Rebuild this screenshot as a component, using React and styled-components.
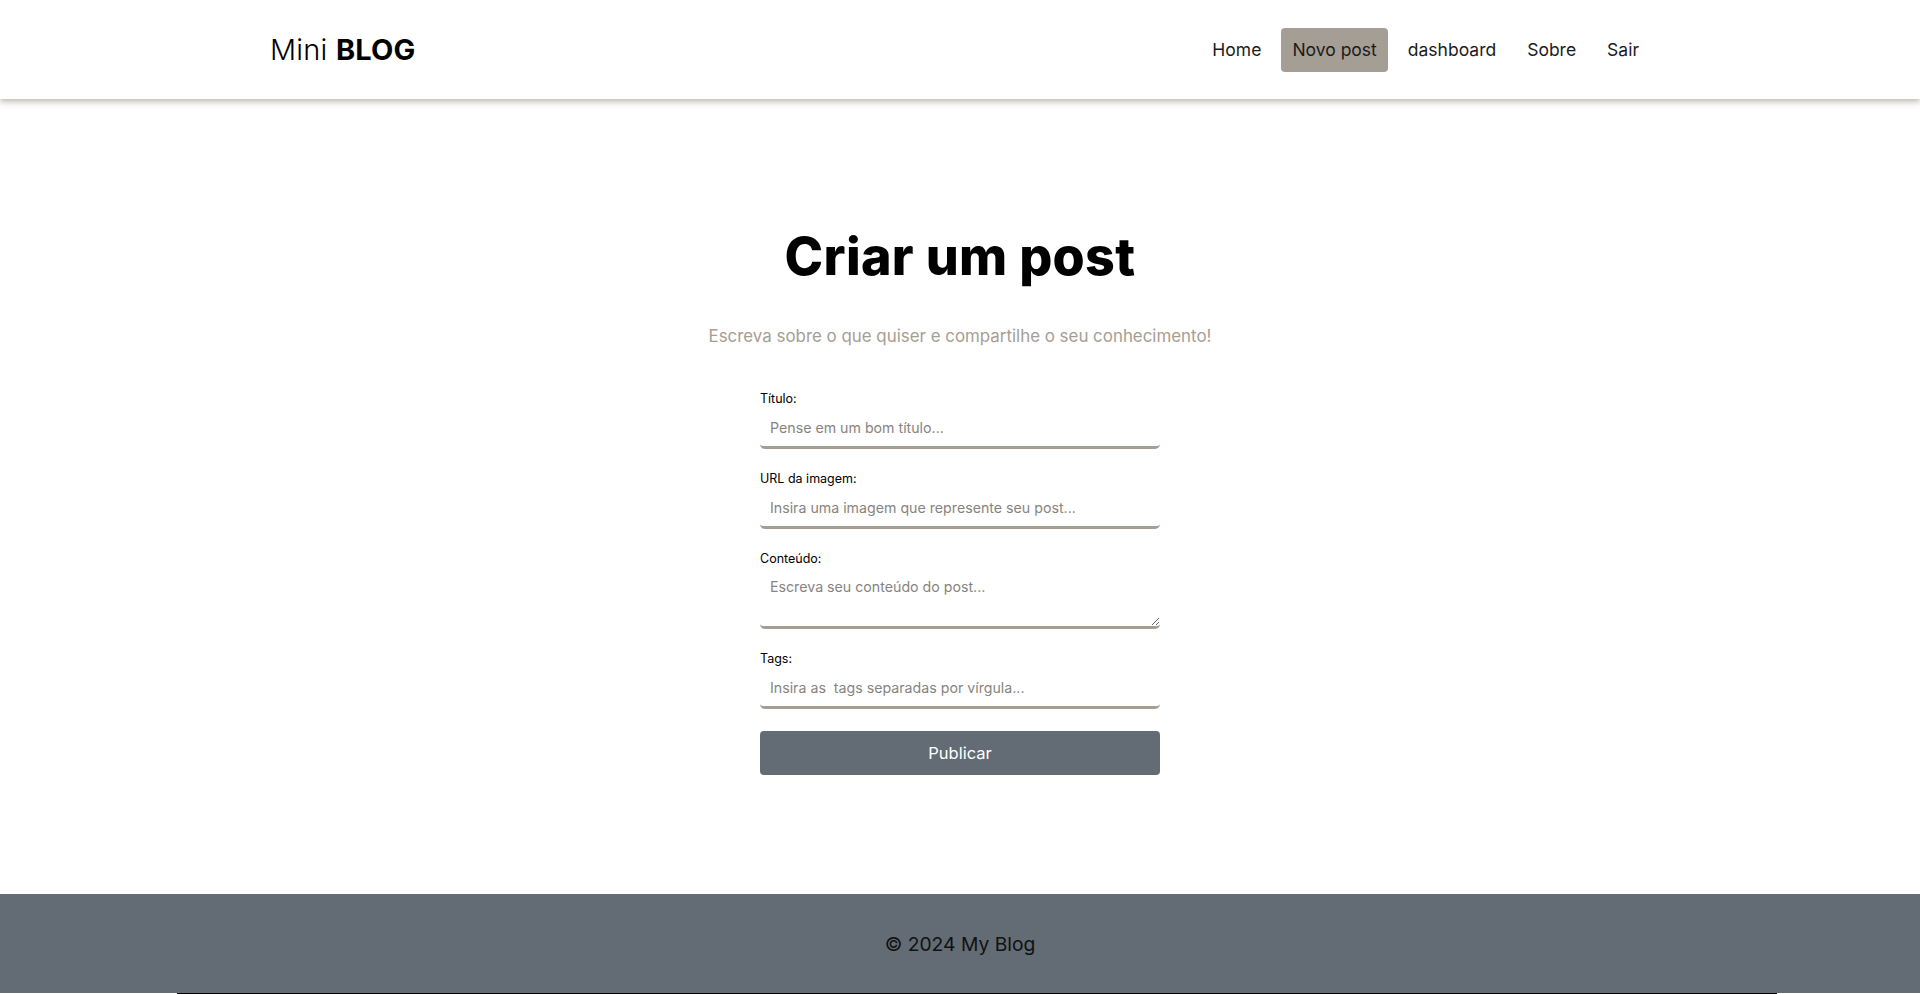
import styled, { createGlobalStyle } from "styled-components";

const GlobalStyle = createGlobalStyle`
  * {
    box-sizing: border-box;
  }
  body {
    margin: 0;
    font-family: Inter, "Noto Sans", Arial, sans-serif;
    color: #000;
    background: #fff;
  }
`;

const Page = styled.div`
  display: flex;
  flex-direction: column;
  min-height: 100vh;
`;

const Navbar = styled.header`
  height: 99px;
  background: #fff;
  box-shadow: 0 3px 6px rgba(120, 110, 95, 0.45);
  position: relative;
  z-index: 2;
`;

const NavInner = styled.nav`
  max-width: 1380px;
  height: 100%;
  margin: 0 auto;
  display: flex;
  justify-content: space-between;
  align-items: center;
`;

const Brand = styled.a`
  font-size: 29px;
  font-weight: 300;
  color: #000;
  text-decoration: none;
  letter-spacing: 0.2px;

  span {
    font-weight: 700;
  }
`;

const LinksList = styled.ul`
  display: flex;
  align-items: center;
  gap: 9px;
  list-style: none;
  margin: 0;
  padding: 0;
`;

const NavLink = styled.a`
  display: block;
  padding: 11px 11px;
  font-size: 17.5px;
  line-height: 22px;
  color: #1b1b1b;
  text-decoration: none;
  border-radius: 4px;
  cursor: pointer;
  background: ${(props) => (props.$active ? "#a59e94" : "transparent")};
`;

const Main = styled.main`
  min-height: 795px;
  padding-top: 127px;
  display: flex;
  flex-direction: column;
  align-items: center;
`;

const Title = styled.h1`
  margin: 0;
  font-size: 52px;
  line-height: 62px;
  font-weight: 800;
  letter-spacing: 0.3px;
`;

const Subtitle = styled.p`
  margin: 38px 0 0;
  font-size: 16.9px;
  line-height: 20px;
  color: #a59e93;
`;

const Form = styled.form`
  width: 400px;
  margin-top: 44px;
  display: flex;
  flex-direction: column;
  gap: 21px;
`;

const Field = styled.label`
  display: flex;
  flex-direction: column;
`;

const FieldLabel = styled.span`
  font-size: 12.5px;
  line-height: 18px;
  color: #000;
`;

const fieldStyles = `
  width: 100%;
  border: none;
  border-bottom: 3px solid #a59e93;
  border-radius: 5px;
  padding: 10px 10px;
  font-family: Inter, "Noto Sans", Arial, sans-serif;
  font-size: 14.2px;
  color: #333;
  outline: none;
  background: #fff;

  &::placeholder {
    color: #878480;
  }
`;

const Input = styled.input`
  ${fieldStyles}
  height: 41px;
`;

const TextArea = styled.textarea`
  ${fieldStyles}
  height: 61px;
  resize: vertical;
  display: block;
`;

const Button = styled.button`
  height: 44px;
  margin-top: 1px;
  border: none;
  border-radius: 4px;
  background: #636c75;
  color: #fff;
  font-family: Inter, "Noto Sans", Arial, sans-serif;
  font-size: 16.5px;
  cursor: pointer;
`;

const Footer = styled.footer`
  height: 99px;
  background: #636c75;
  display: flex;
  justify-content: center;
  align-items: center;
`;

const FooterText = styled.p`
  margin: 0;
  font-size: 19.3px;
  color: #111;
`;

const BottomRule = styled.div`
  width: 1600px;
  margin-left: 177px;
  border-top: 1px solid #000;
  height: 40px;
`;

const links = [
  { label: "Home" },
  { label: "Novo post", active: true },
  { label: "dashboard" },
  { label: "Sobre" },
  { label: "Sair" },
];

const fields = [
  { label: "Título:", placeholder: "Pense em um bom título..." },
  { label: "URL da imagem:", placeholder: "Insira uma imagem que represente seu post..." },
  { label: "Conteúdo:", placeholder: "Escreva seu conteúdo do post...", multiline: true },
  { label: "Tags:", placeholder: "Insira as  tags separadas por vírgula..." },
];

export default function App() {
  return (
    <Page>
      <GlobalStyle />
      <Navbar>
        <NavInner>
          <Brand href="#">
            Mini <span>BLOG</span>
          </Brand>
          <LinksList>
            {links.map((link) => (
              <li key={link.label}>
                <NavLink $active={link.active}>{link.label}</NavLink>
              </li>
            ))}
          </LinksList>
        </NavInner>
      </Navbar>
      <Main>
        <Title>Criar um post</Title>
        <Subtitle>Escreva sobre o que quiser e compartilhe o seu conhecimento!</Subtitle>
        <Form onSubmit={(e) => e.preventDefault()}>
          {fields.map((field) => (
            <Field key={field.label}>
              <FieldLabel>{field.label}</FieldLabel>
              {field.multiline ? (
                <TextArea placeholder={field.placeholder} />
              ) : (
                <Input type="text" placeholder={field.placeholder} />
              )}
            </Field>
          ))}
          <Button type="submit">Publicar</Button>
        </Form>
      </Main>
      <Footer>
        <FooterText>© 2024 My Blog</FooterText>
      </Footer>
      <BottomRule />
    </Page>
  );
}
